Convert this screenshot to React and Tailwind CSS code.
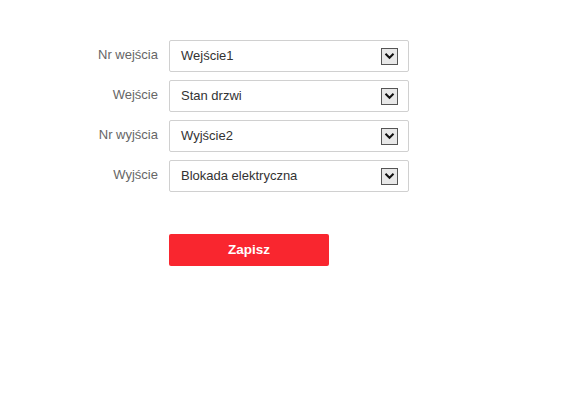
import React from "react";

const rows = [
  ["Nr wejścia", "Wejście1"],
  ["Wejście", "Stan drzwi"],
  ["Nr wyjścia", "Wyjście2"],
  ["Wyjście", "Blokada elektryczna"],
];

function Chevron() {
  return (
    <div className="w-[17px] h-[17px] border border-[#555] bg-[#e8e8e8] flex items-center justify-center">
      <svg width="11" height="8" viewBox="0 0 11 8">
        <path d="M1.5 1.8 L5.5 5.8 L9.5 1.8" fill="none" stroke="#111" strokeWidth="2" />
      </svg>
    </div>
  );
}

export default function App() {
  return (
    <div className="w-[562px] h-[409px] bg-white font-['Liberation_Sans',Arial,sans-serif] pt-[40px] pl-[58px]">
      <div className="flex flex-col gap-[8px]">
        {rows.map(([label, value]) => (
          <div key={label} className="flex items-center">
            <div className="w-[100px] text-right text-[13px] text-[#666] -mt-[3px]">{label}</div>
            <div className="ml-[11px] w-[240px] h-[32px] border border-[#d0d0d0] rounded-[2px] flex items-center justify-between pl-[11px] pr-[10px]">
              <span className="text-[13px] text-[#333]">{value}</span>
              <Chevron />
            </div>
          </div>
        ))}
      </div>
      <div className="mt-[42px] ml-[111px]">
        <button className="w-[160px] h-[32px] bg-[#f9262f] rounded-[2px] text-white text-[13.5px] font-bold">
          Zapisz
        </button>
      </div>
    </div>
  );
}
